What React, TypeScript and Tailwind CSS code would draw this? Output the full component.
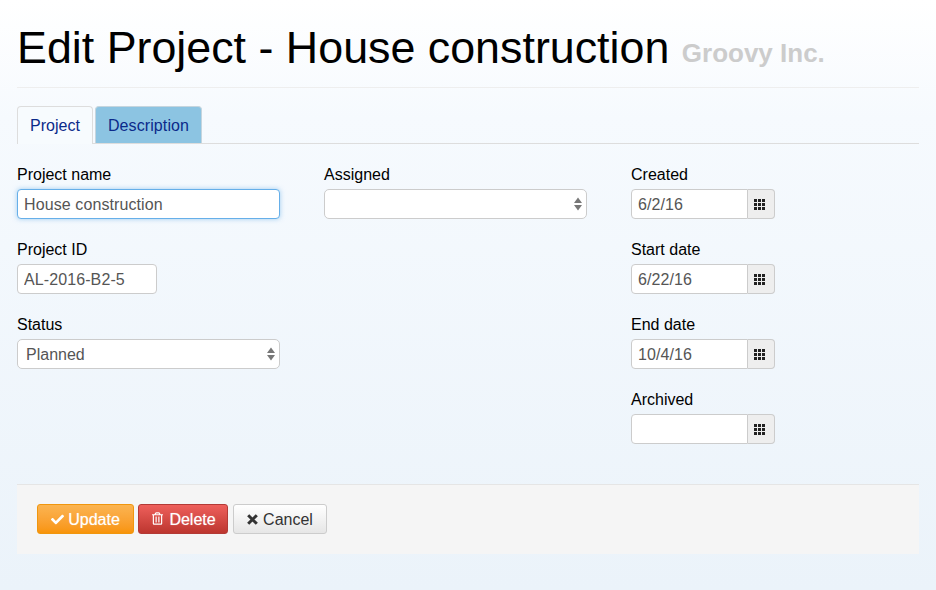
import { FaCheck, FaRegTrashAlt } from 'react-icons/fa'

function GridIcon() {
  return (
    <svg width="11" height="11" viewBox="0 0 11 11" fill="#222">
      {[0, 4, 8].map((y) =>
        [0, 4, 8].map((x) => <rect key={`${x}-${y}`} x={x} y={y} width="3" height="3" />),
      )}
    </svg>
  )
}

function Field({ label, children }: { label: string; children: React.ReactNode }) {
  return (
    <div className="mb-5">
      <label className="block mb-[4px] pt-px text-[16px] leading-5 text-black">{label}</label>
      {children}
    </div>
  )
}

function SelectBox({ value }: { value: string }) {
  return (
    <div className="flex items-center justify-between h-[30px] rounded-[5px] border border-[#ccc] bg-white pl-2 pr-[4px] text-[16px] text-[#555]">
      <span className="pt-px">{value}</span>
      <svg width="8" height="14" viewBox="0 0 8 14" fill="#777">
        <path d="M4 0.5 L8 6 H0 Z" />
        <path d="M4 13.5 L8 8 H0 Z" />
      </svg>
    </div>
  )
}

function DateField({ label, value }: { label: string; value: string }) {
  return (
    <Field label={label}>
      <div className="flex w-[144px] h-[30px]">
        <input
          readOnly
          value={value}
          className="w-[117px] rounded-l-[4px] border border-[#ccc] bg-white px-[6px] pt-[2px] text-[16px] tracking-[0.1px] text-[#555] outline-none"
        />
        <span className="flex w-[27px] items-center justify-start pl-[6px] rounded-r-[4px] border border-l-0 border-[#ccc] bg-[#eee]">
          <GridIcon />
        </span>
      </div>
    </Field>
  )
}

export default function App() {
  return (
    <div className="min-h-[590px] bg-gradient-to-b from-white via-[#f6fafe] via-[20%] to-[#ebf3fa] px-[17px] font-['Liberation_Sans',Arial,sans-serif]">
      <div className="w-[902px]">
        <div className="h-[88px] border-b border-[#eee] pt-[20px]">
          <h1 className="text-[44.8px] leading-[54px] font-normal text-black whitespace-nowrap">
            Edit Project - House construction{' '}
            <small className="align-[1px] text-[26px] text-[#ccc] font-bold">Groovy Inc.</small>
          </h1>
        </div>

        <div className="flex mt-[18px] h-[38px] border-b border-[#ddd]">
          <div className="flex h-[38px] w-[76px] items-center justify-center rounded-t-[4px] border border-[#ddd] border-b-0 bg-[#f7fbfe] text-[16px] text-[#0b2a8a]">
            Project
          </div>
          <div className="ml-[2px] flex h-[37px] w-[107px] items-center justify-center rounded-t-[4px] border border-[#c5d5de] border-b-0 bg-[#8cc4e2] pt-px text-[16px] tracking-[0.1px] text-[#0b2a8a]">
            Description
          </div>
        </div>

        <div className="grid grid-cols-[263px_263px_263px] gap-x-[44px] pt-[20px]">
          <div>
            <Field label="Project name">
              <input
                readOnly
                value="House construction"
                className="block h-[30px] w-full rounded-[4px] border border-[#66afe9] bg-white px-[6px] pt-[2px] text-[16px] tracking-[0.1px] text-[#555] outline-none shadow-[0_0_5px_rgba(102,175,233,0.6)]"
              />
            </Field>
            <Field label="Project ID">
              <input
                readOnly
                value="AL-2016-B2-5"
                className="block h-[30px] w-[140px] rounded-[4px] border border-[#ccc] bg-white px-[6px] pt-[2px] text-[16px] tracking-[0.1px] text-[#555] outline-none"
              />
            </Field>
            <Field label="Status">
              <SelectBox value="Planned" />
            </Field>
          </div>
          <div>
            <Field label="Assigned">
              <SelectBox value="" />
            </Field>
          </div>
          <div>
            <DateField label="Created" value="6/2/16" />
            <DateField label="Start date" value="6/22/16" />
            <DateField label="End date" value="10/4/16" />
            <DateField label="Archived" value="" />
          </div>
        </div>

        <div className="mt-[20px] flex h-[70px] items-start border-t border-[#e5e5e5] bg-[#f5f5f5] pl-5 pt-[19px]">
          <button className="flex h-[30px] w-[97px] items-center justify-center gap-[4px] rounded-[3px] border border-[#f0960e] bg-gradient-to-b from-[#fbb450] to-[#f89406] pt-px text-[16px] text-white [text-shadow:0_0_1px_rgba(255,255,255,0.6)]">
            <FaCheck className="w-[13px] h-[13px]" />
            Update
          </button>
          <button className="ml-1 flex h-[30px] w-[90px] items-center justify-center gap-[6px] rounded-[3px] border border-[#b33a36] bg-gradient-to-b from-[#ee5f5b] to-[#bd362f] pl-[2px] pt-px text-[16px] text-white [text-shadow:0_0_1px_rgba(255,255,255,0.6)]">
            <FaRegTrashAlt className="w-[11px] h-[13px] -mt-[2px]" />
            Delete
          </button>
          <button className="ml-[5px] flex h-[30px] w-[94px] items-center justify-center gap-[5px] rounded-[3px] border border-[#ccc] bg-gradient-to-b from-white to-[#e6e6e6] pt-px text-[16px] text-[#333]">
            <svg width="11" height="11" viewBox="0 0 11 11" stroke="#333" strokeWidth="3" className="-mt-px">
              <path d="M1.2 1.2 L9.8 9.8 M9.8 1.2 L1.2 9.8" />
            </svg>
            Cancel
          </button>
        </div>
      </div>
    </div>
  )
}
